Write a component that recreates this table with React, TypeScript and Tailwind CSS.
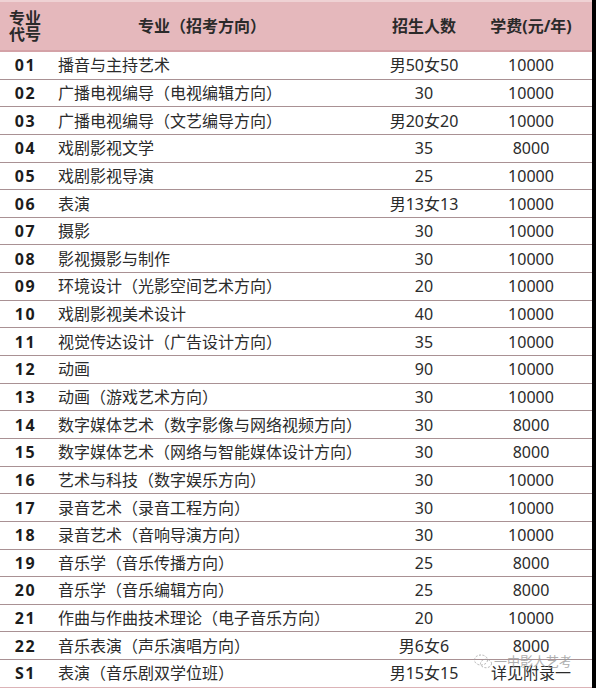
import React from "react";

const rows: [string, string, string, string][] = [
  ["01", "播音与主持艺术", "男50女50", "10000"],
  ["02", "广播电视编导（电视编辑方向）", "30", "10000"],
  ["03", "广播电视编导（文艺编导方向）", "男20女20", "10000"],
  ["04", "戏剧影视文学", "35", "8000"],
  ["05", "戏剧影视导演", "25", "10000"],
  ["06", "表演", "男13女13", "10000"],
  ["07", "摄影", "30", "10000"],
  ["08", "影视摄影与制作", "30", "10000"],
  ["09", "环境设计（光影空间艺术方向）", "20", "10000"],
  ["10", "戏剧影视美术设计", "40", "10000"],
  ["11", "视觉传达设计（广告设计方向）", "35", "10000"],
  ["12", "动画", "90", "10000"],
  ["13", "动画（游戏艺术方向）", "30", "10000"],
  ["14", "数字媒体艺术（数字影像与网络视频方向）", "30", "8000"],
  ["15", "数字媒体艺术（网络与智能媒体设计方向）", "30", "8000"],
  ["16", "艺术与科技（数字娱乐方向）", "30", "10000"],
  ["17", "录音艺术（录音工程方向）", "30", "10000"],
  ["18", "录音艺术（音响导演方向）", "30", "10000"],
  ["19", "音乐学（音乐传播方向）", "25", "8000"],
  ["20", "音乐学（音乐编辑方向）", "25", "8000"],
  ["21", "作曲与作曲技术理论（电子音乐方向）", "20", "10000"],
  ["22", "音乐表演（声乐演唱方向）", "男6女6", "8000"],
  ["S1", "表演（音乐剧双学位班）", "男15女15", "详见附录一"],
];

export default function App() {
  return (
    <div
      className="relative flex w-[596px] h-[688px] overflow-hidden bg-white text-[#2b2b2b]"
      style={{ fontFamily: '"Noto Sans", "Noto Sans CJK SC", sans-serif' }}
    >
      <div className="w-[592px] flex flex-col">
        <div className="flex h-[52px] bg-[#e5b8bc] border-t-[2px] border-t-[#efd2d4] border-b-[2px] border-b-[#d4a2a7] font-bold text-[16px] text-[#2a2a2a]">
          <div className="w-[50px] flex flex-col items-center justify-center gap-[1px] leading-[15px] text-[16px]">
            <span>专业</span>
            <span>代号</span>
          </div>
          <div className="w-[320px] flex items-center justify-center pr-[16px]">专业（招考方向）</div>
          <div className="w-[108px] flex items-center justify-center">招生人数</div>
          <div className="w-[106px] flex items-center justify-center">学费(元/年)</div>
          <div className="flex-1" />
        </div>
        {rows.map(([code, name, count, fee], i) => (
          <div
            key={code}
            className={
              "flex h-[27.65px] items-center text-[16px] leading-none border-b " +
              (i === rows.length - 1 ? "border-[#dcb3b7]" : "border-[#a99194]")
            }
          >
            <div className="w-[50px] text-center font-bold text-[#1c1c1c] tracking-[1.5px] pl-[1px]">{code}</div>
            <div className="w-[320px] pl-[8px] whitespace-nowrap">{name}</div>
            <div className="w-[108px] text-center">{count}</div>
            <div className="w-[106px] text-center">{fee}</div>
            <div className="flex-1" />
          </div>
        ))}
      </div>
      <div className="w-[4px] bg-black" />
      <div className="absolute left-[473px] top-[654px] flex items-center gap-[1px] text-[13px] leading-none text-[#9a9a9a] opacity-80">
        <svg width="20" height="15" viewBox="0 0 20 15" fill="none" stroke="#a0a0a0" strokeWidth="1" strokeDasharray="2 1.5">
          <ellipse cx="8" cy="6" rx="6.5" ry="5" />
          <ellipse cx="13" cy="9.5" rx="5.5" ry="4.2" />
        </svg>
        <span>一中影人艺考</span>
      </div>
    </div>
  );
}
